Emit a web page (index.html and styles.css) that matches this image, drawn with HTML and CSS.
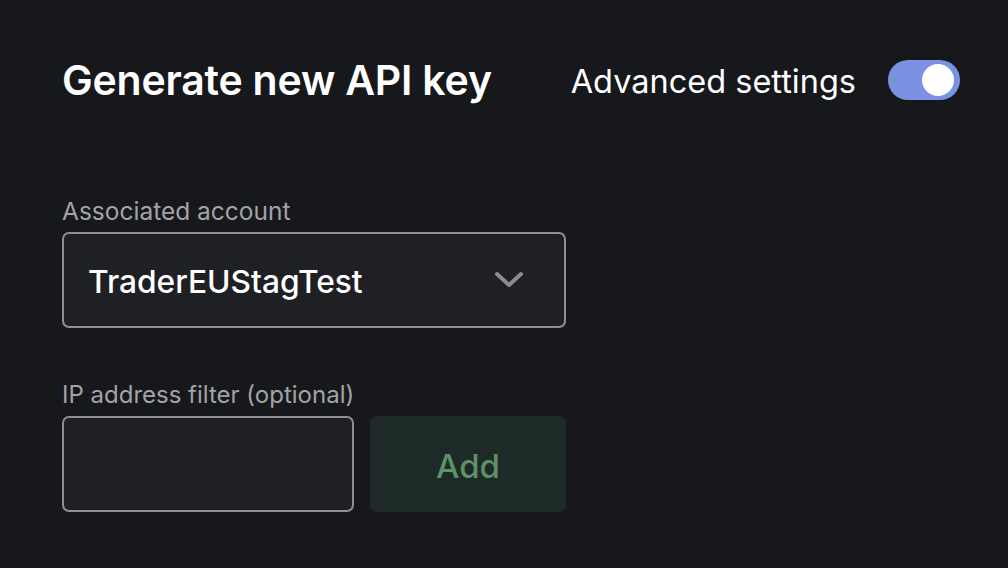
FILE: index.html
```html
<!DOCTYPE html>
<html lang="en">
<head>
<meta charset="utf-8">
<title>Generate new API key</title>
<link rel="stylesheet" href="styles.css">
</head>
<body>
<main class="panel">
  <header class="head">
    <h1 class="title">Generate new API key</h1>
    <div class="adv">
      <span class="adv-label">Advanced settings</span>
      <span class="toggle"><span class="knob"></span></span>
    </div>
  </header>

  <section class="field account">
    <label class="label">Associated account</label>
    <div class="select">
      <span class="select-value">TraderEUStagTest</span>
      <svg class="chev" width="30" height="18" viewBox="0 0 30 18"><path d="M3 3 L15 14 L27 3" fill="none" stroke="#8c8c8e" stroke-width="4" stroke-linecap="round" stroke-linejoin="round"/></svg>
    </div>
  </section>

  <section class="field ip">
    <label class="label">IP address filter (optional)</label>
    <div class="ip-row">
      <div class="input"></div>
      <button class="add">Add</button>
    </div>
  </section>
</main>
</body>
</html>
```

FILE: styles.css
```css
html, body {
  margin: 0;
  padding: 0;
  background: #17181c;
  height: 100%;
}
body {
  font-family: "Inter", "Open Sans", sans-serif;
  color: #ffffff;
}
.panel {
  padding: 58px 48px 0 62px;
  width: 898px;
}
.head {
  display: flex;
  align-items: center;
  justify-content: space-between;
  height: 44px;
}
.title {
  margin: 0;
  font-size: 41px;
  font-weight: 600;
  letter-spacing: -0.2px;
  line-height: 44px;
}
.adv {
  display: flex;
  align-items: center;
  gap: 32px;
}
.adv-label {
  font-size: 32.5px;
  font-weight: 400;
  line-height: 40px;
  padding-top: 4px;
}
.toggle {
  width: 72px;
  height: 40px;
  border-radius: 20px;
  background: #7b92e2;
  display: flex;
  align-items: center;
  justify-content: flex-end;
  padding: 0 6px;
  box-sizing: border-box;
}
.knob {
  width: 32px;
  height: 32px;
  border-radius: 50%;
  background: #ffffff;
}
.field {
  width: 504px;
}
.account {
  margin-top: 94px;
}
.ip {
  margin-top: 52px;
}
.label {
  display: block;
  font-size: 24.5px;
  line-height: 30px;
  color: #a3a3a6;
  margin-bottom: 6px;
}
.ip .label {
  font-size: 24px;
}
.select {
  height: 96px;
  box-sizing: border-box;
  border: 2px solid #8f8f92;
  border-radius: 7px;
  background: #1f2023;
  display: flex;
  align-items: center;
  justify-content: space-between;
  padding: 0 40px 0 24px;
}
.select-value {
  font-size: 31.7px;
  font-weight: 500;
  padding-top: 2px;
}
.ip-row {
  display: flex;
  gap: 16px;
  height: 96px;
}
.input {
  width: 292px;
  box-sizing: border-box;
  border: 2px solid #8f8f92;
  border-radius: 7px;
  background: #1f2023;
}
.add {
  flex: 1;
  border: none;
  border-radius: 7px;
  background: #1e2a27;
  color: #5f9068;
  font-family: inherit;
  font-size: 33px;
  font-weight: 500;
  padding: 4px 0 0;
}
```
